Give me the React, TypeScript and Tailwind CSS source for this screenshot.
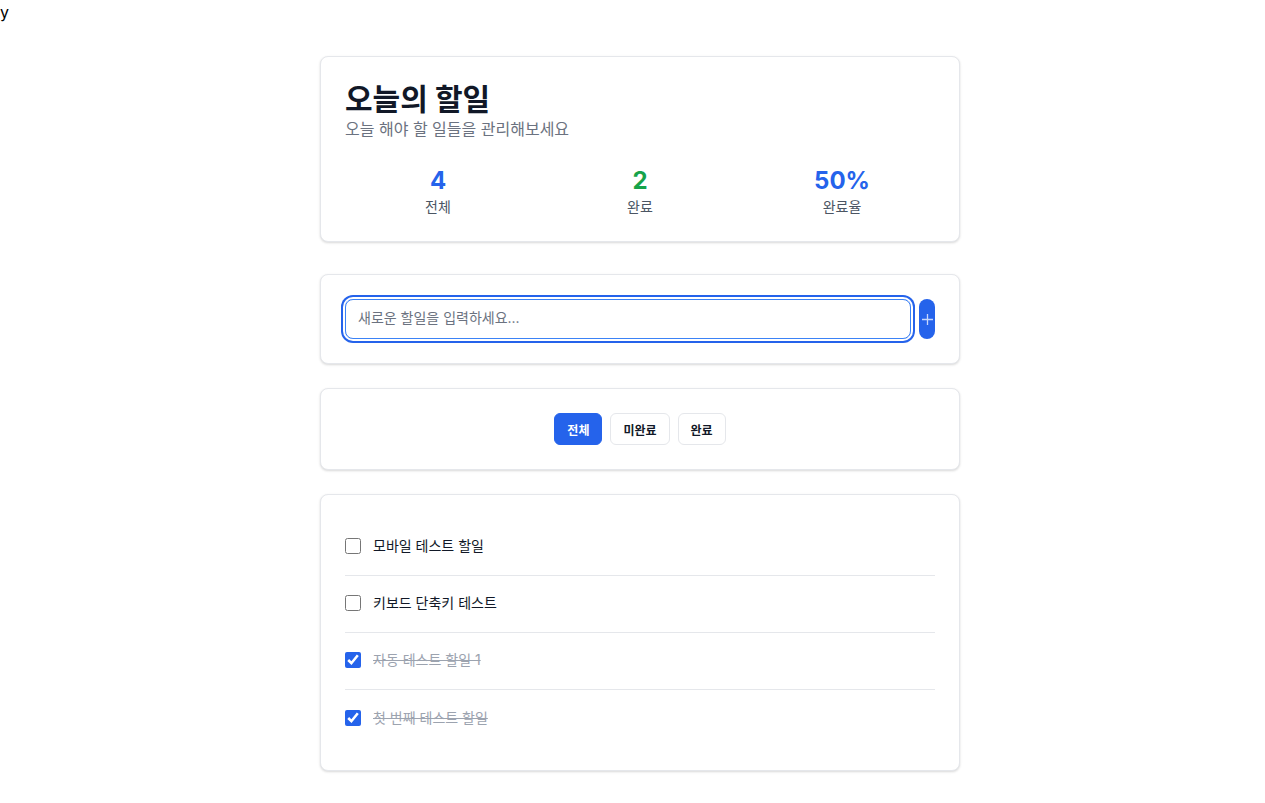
import { useState } from 'react';

type Todo = { id: number; text: string; done: boolean };

const initialTodos: Todo[] = [
  { id: 4, text: '모바일 테스트 할일', done: false },
  { id: 3, text: '키보드 단축키 테스트', done: false },
  { id: 2, text: '자동 테스트 할일 1', done: true },
  { id: 1, text: '첫 번째 테스트 할일', done: true },
];

const filters = ['전체', '미완료', '완료'];

function Card({ children, className = '' }: { children: React.ReactNode; className?: string }) {
  return (
    <div className={`bg-white border border-[#e5e7eb] rounded-lg shadow-[0_1px_3px_rgba(0,0,0,0.1),0_1px_2px_rgba(0,0,0,0.06)] p-6 ${className}`}>
      {children}
    </div>
  );
}

export default function App() {
  const [todos, setTodos] = useState(initialTodos);
  const [filter, setFilter] = useState('전체');
  const [text, setText] = useState('');

  const done = todos.filter((t) => t.done).length;
  const rate = todos.length ? Math.round((done / todos.length) * 100) : 0;

  const add = () => {
    if (!text.trim()) return;
    setTodos([{ id: Date.now(), text: text.trim(), done: false }, ...todos]);
    setText('');
  };

  const toggle = (id: number) => setTodos(todos.map((t) => (t.id === id ? { ...t, done: !t.done } : t)));

  return (
    <div className="bg-white text-[#111827]" style={{ fontFamily: 'Inter, "Noto Sans CJK KR", sans-serif' }}>
      <div className="leading-6 text-black">y</div>
      <div className="pl-[15px]">
        <div className="w-[640px] mx-auto pt-8 pb-8">
          <Card>
            <h1 className="text-3xl font-bold text-[#111827]">오늘의 할일</h1>
            <p className="text-base text-[#6b7280]">오늘 해야 할 일들을 관리해보세요</p>
            <div className="grid grid-cols-3 gap-4 mt-6 text-center">
              <div>
                <div className="text-2xl font-bold text-[#2563eb]">{todos.length}</div>
                <div className="text-sm text-[#4b5563]">전체</div>
              </div>
              <div>
                <div className="text-2xl font-bold text-[#16a34a]">{done}</div>
                <div className="text-sm text-[#4b5563]">완료</div>
              </div>
              <div>
                <div className="text-2xl font-bold text-[#2563eb]">{rate}%</div>
                <div className="text-sm text-[#4b5563]">완료율</div>
              </div>
            </div>
          </Card>

          <Card className="mt-8">
            <div className="flex gap-2">
              <input
                value={text}
                onChange={(e) => setText(e.target.value)}
                onKeyDown={(e) => e.key === 'Enter' && add()}
                placeholder="새로운 할일을 입력하세요..."
                className="flex-1 h-10 px-3 pb-[3px] text-sm rounded-lg border border-[#3b82f6] outline-none shadow-[0_0_0_2px_#fff,0_0_0_4px_#2563eb] placeholder:text-[#6b7280]"
              />
              <button onClick={add} className="w-4 h-10 rounded-lg bg-[#2563eb] flex items-center justify-center">
                <svg width="13" height="13" viewBox="0 0 13 13" fill="none" stroke="#c7d7fb" strokeWidth="1.3">
                  <path d="M6.5 1v11M1 6.5h11" />
                </svg>
              </button>
            </div>
          </Card>

          <Card className="mt-6">
            <div className="flex justify-center gap-2">
              {filters.map((f) => (
                <button
                  key={f}
                  onClick={() => setFilter(f)}
                  className={`h-8 px-3 pt-1 rounded-md text-xs font-bold border ${
                    filter === f ? 'bg-[#2563eb] border-[#2563eb] text-white' : 'bg-white border-[#e5e7eb] text-[#111827]'
                  }`}
                >
                  {f}
                </button>
              ))}
            </div>
          </Card>

          <Card className="mt-6">
            <ul>
              {todos
                .filter((t) => (filter === '전체' ? true : filter === '완료' ? t.done : !t.done))
                .map((t) => (
                  <li
                    key={t.id}
                    className="flex items-center gap-3 h-[57px] pb-[2px] border-b border-[#e5e7eb] last:border-b-0 last:h-14 last:pb-0"
                  >
                    <input
                      type="checkbox"
                      checked={t.done}
                      onChange={() => toggle(t.id)}
                      className="w-4 h-4 m-0 accent-[#2563eb]"
                    />
                    <span className={`text-sm ${t.done ? 'line-through text-[#9ca3af]' : 'text-[#111827]'}`}>{t.text}</span>
                  </li>
                ))}
            </ul>
          </Card>
        </div>
      </div>
    </div>
  );
}
